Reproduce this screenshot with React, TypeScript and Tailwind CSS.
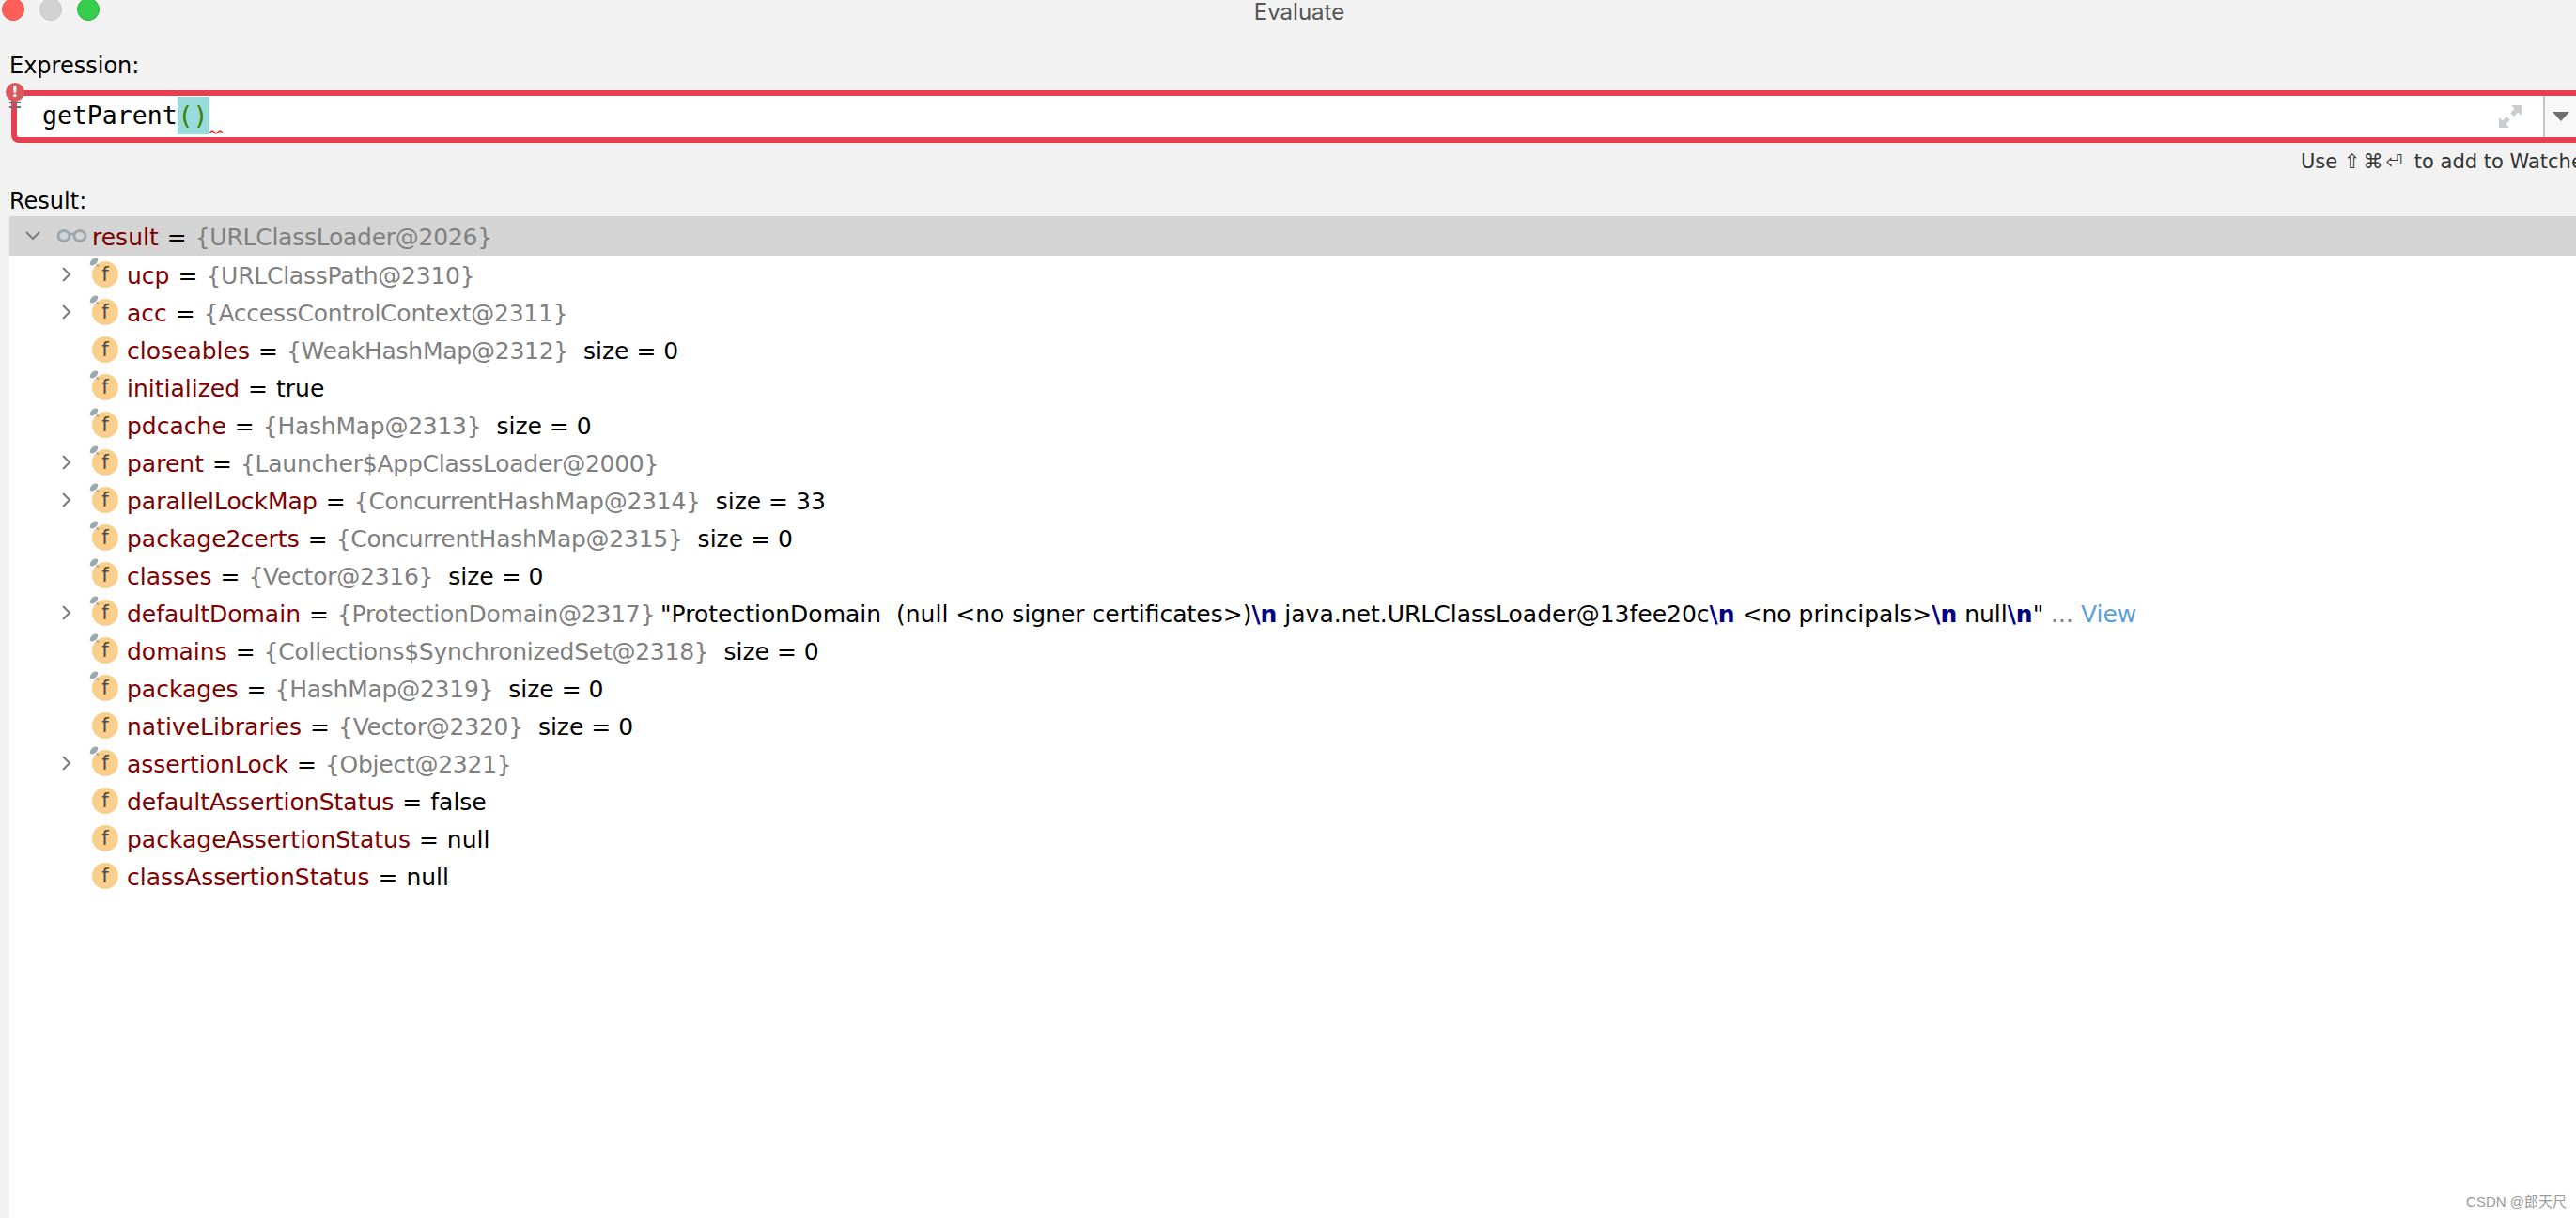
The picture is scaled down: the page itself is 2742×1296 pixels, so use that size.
import { ReactNode } from "react";

interface Row {
  name: string;
  value?: string;
  plain?: string;
  expandable?: boolean;
  pinned?: boolean;
  extra?: ReactNode;
}

const rows: Row[] = [
  { name: "ucp", value: "{URLClassPath@2310}", expandable: true, pinned: true },
  { name: "acc", value: "{AccessControlContext@2311}", expandable: true, pinned: true },
  { name: "closeables", value: "{WeakHashMap@2312}", plain: "size = 0" },
  { name: "initialized", plain: "true", pinned: true },
  { name: "pdcache", value: "{HashMap@2313}", plain: "size = 0", pinned: true },
  { name: "parent", value: "{Launcher$AppClassLoader@2000}", expandable: true, pinned: true },
  { name: "parallelLockMap", value: "{ConcurrentHashMap@2314}", plain: "size = 33", expandable: true, pinned: true },
  { name: "package2certs", value: "{ConcurrentHashMap@2315}", plain: "size = 0", pinned: true },
  { name: "classes", value: "{Vector@2316}", plain: "size = 0", pinned: true },
  {
    name: "defaultDomain",
    value: "{ProtectionDomain@2317}",
    expandable: true,
    pinned: true,
    extra: (
      <span className="ml-[6px] pt-[3px] text-black">
        "ProtectionDomain&nbsp; (null &lt;no signer certificates&gt;)
        <b className="text-[#000080]">\n</b> java.net.URLClassLoader@13fee20c
        <b className="text-[#000080]">\n</b> &lt;no principals&gt;
        <b className="text-[#000080]">\n</b> null
        <b className="text-[#000080]">\n</b>"
        <span className="text-[#808080]"> ... </span>
        <span className="text-[#5c9fd8]">View</span>
      </span>
    ),
  },
  { name: "domains", value: "{Collections$SynchronizedSet@2318}", plain: "size = 0", pinned: true },
  { name: "packages", value: "{HashMap@2319}", plain: "size = 0", pinned: true },
  { name: "nativeLibraries", value: "{Vector@2320}", plain: "size = 0" },
  { name: "assertionLock", value: "{Object@2321}", expandable: true, pinned: true },
  { name: "defaultAssertionStatus", plain: "false" },
  { name: "packageAssertionStatus", plain: "null" },
  { name: "classAssertionStatus", plain: "null" },
];

const Chevron = ({ down }: { down?: boolean }) => (
  <svg width="18" height="18" viewBox="0 0 18 18" fill="none" stroke="#7f7f7f" strokeWidth="2.2">
    {down ? <path d="M2 5l7 7 7-7" /> : <path d="M5 2l7 7-7 7" />}
  </svg>
);

const FieldIcon = ({ pinned }: { pinned?: boolean }) => (
  <div className="relative flex h-[28px] w-[28px] items-center justify-center rounded-full bg-[#f9cf8b] text-[21px] leading-none text-[#4c4c4c]">
    f
    {pinned && (
      <svg className="absolute left-[-3px] top-[-4px]" width="14" height="14" viewBox="0 0 14 14">
        <ellipse cx="5" cy="4.5" rx="5" ry="3" transform="rotate(-40 5 4.5)" fill="#9aa7b0" />
        <path d="M7 7l4 1.5-2 2z" fill="#9aa7b0" />
      </svg>
    )}
  </div>
);

const Glasses = () => (
  <svg width="33" height="16" viewBox="0 0 33 16" fill="none" stroke="#9aa7b0" strokeWidth="2.8">
    <ellipse cx="8" cy="8" rx="6" ry="5.5" />
    <ellipse cx="25" cy="8" rx="6" ry="5.5" />
    <path d="M14 6h5" />
  </svg>
);

const TreeRow = ({ row }: { row: Row }) => (
  <div className="flex h-[40px] items-center pl-[52px] whitespace-nowrap">
    <div className="flex w-[36px] items-center">{row.expandable && <Chevron />}</div>
    <FieldIcon pinned={row.pinned} />
    <span className="ml-[9px] pt-[3px] text-[#7f0000]">{row.name}</span>
    <span className="mx-[9px] pt-[3px]">=</span>
    {row.value && <span className="pt-[3px] tracking-[-0.25px] text-[#808080]">{row.value}</span>}
    {row.plain && <span className={row.value ? "ml-[16px] pt-[3px]" : "pt-[3px]"}>{row.plain}</span>}
    {row.extra}
  </div>
);

export default function App() {
  return (
    <div
      className="flex h-[1296px] w-[2742px] flex-col overflow-hidden bg-[#f2f2f2] text-[25px] text-black"
      style={{ fontFamily: '"DejaVu Sans", "Noto Sans CJK SC", sans-serif' }}
    >
      {/* Title bar */}
      <div className="relative flex h-[44px] shrink-0 items-start justify-center">
        <div className="absolute left-[2px] top-[-2px] flex gap-[16px]">
          <div className="h-[24px] w-[24px] rounded-full border border-[#e5534b] bg-[#ff5f57]" />
          <div className="h-[24px] w-[24px] rounded-full border border-[#c4c4c4] bg-[#d2d2d2]" />
          <div className="h-[24px] w-[24px] rounded-full border border-[#2bb13c] bg-[#35cd4b]" />
        </div>
        <span className="ml-[24px] mt-[-5px] text-[24px] text-[#555555]" style={{ fontFamily: "Inter, sans-serif" }}>
          Evaluate
        </span>
      </div>

      {/* Expression */}
      <div className="flex h-[52px] shrink-0 items-center pl-[10px] text-[24px]">Expression:</div>
      <div className="relative ml-[12px] flex h-[56px] shrink-0 rounded-l-[8px] border-y-[6px] border-l-[6px] border-[#e64050] bg-white">
        <div className="absolute left-[-12px] top-[-14px] flex h-[20px] w-[20px] items-center justify-center rounded-full bg-[#db5860] text-[16px] font-bold leading-none text-white">
          !
        </div>
        <div className="absolute left-[-8px] top-[6px] flex w-[12px] flex-col gap-[3px]">
          <div className="h-[2px] bg-[#6e6e6e]" />
          <div className="h-[2px] bg-[#6e6e6e]" />
        </div>
        <div className="flex flex-1 items-center pb-[2px] pl-[27px] text-[26.5px]" style={{ fontFamily: '"DejaVu Sans Mono", monospace' }}>
          <span>getParent</span>
          <span className="relative bg-[#99dada] px-[1px] text-[#3a8200]">
            ()
            <svg className="absolute bottom-[0px] right-[-14px]" width="14" height="6" viewBox="0 0 14 6" fill="none" stroke="#ff0000" strokeWidth="1.2">
              <path d="M0 4l3-2 4 3 4-3 3 2" />
            </svg>
          </span>
        </div>
        <div className="flex w-[70px] shrink-0 items-center justify-center">
          <svg width="24" height="24" viewBox="0 0 26 26" fill="#c9cdd0">
            <path d="M26 0H14l4 4-5 5 4 4 5-5 4 4zM0 26h12l-4-4 5-5-4-4-5 5-4-4z" />
          </svg>
        </div>
        <div className="flex w-[35px] shrink-0 items-center justify-center border-l-2 border-[#c4c4c4] bg-[#f8f8f8]">
          <svg width="18" height="10" viewBox="0 0 18 10" fill="#6e6e6e">
            <path d="M0 0h18l-9 10z" />
          </svg>
        </div>
      </div>

      {/* Hint */}
      <div className="flex h-[40px] shrink-0 items-center justify-start whitespace-nowrap pl-[2449px] pt-[2px] text-[21px] text-[#333333]">
        <span className="whitespace-pre">Use </span>
        <span className="whitespace-pre tracking-[3px]">⇧⌘⏎ </span>
        <span className="whitespace-pre">to add to Watches</span>
      </div>

      {/* Result */}
      <div className="flex h-[38px] shrink-0 items-center pl-[10px] pt-[5px] text-[24px]">Result:</div>
      <div className="ml-[10px] flex flex-1 flex-col bg-white">
        <div className="flex h-[42px] shrink-0 items-center whitespace-nowrap bg-[#d4d4d4] pl-[16px]">
          <div className="flex w-[34px] items-center">
            <Chevron down />
          </div>
          <Glasses />
          <span className="ml-[5px] pt-[3px] text-[#7f0000]">result</span>
          <span className="mx-[9px] pt-[3px]">=</span>
          <span className="pt-[3px] tracking-[-0.25px] text-[#808080]">{"{URLClassLoader@2026}"}</span>
        </div>
        {rows.map((row) => (
          <TreeRow key={row.name} row={row} />
        ))}
        <div
          className="mt-auto flex justify-end pb-[6px] pr-[10px] text-[15px] text-[#9a9a9a]"
          style={{ fontFamily: '"Liberation Sans", "Noto Sans CJK SC", sans-serif' }}
        >
          CSDN @郎天尺
        </div>
      </div>
    </div>
  );
}
